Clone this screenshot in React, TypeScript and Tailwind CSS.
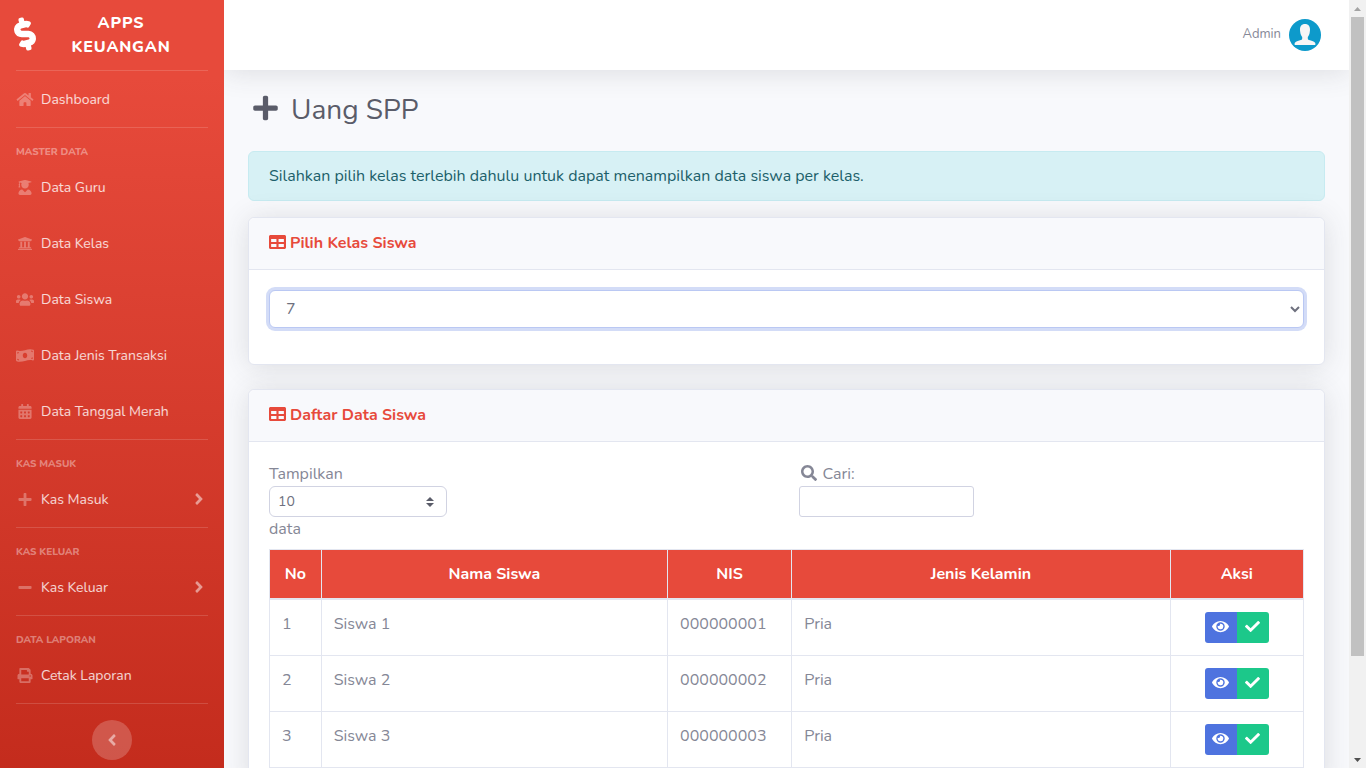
import React, { useState } from "react";
import type { IconType } from "react-icons";
import {
  FaAngleLeft,
  FaAngleRight,
  FaCalendarAlt,
  FaCheck,
  FaDollarSign,
  FaEye,
  FaHome,
  FaMinus,
  FaMoneyBillWave,
  FaPlus,
  FaPrint,
  FaSearch,
  FaTable,
  FaUniversity,
  FaUserGraduate,
  FaUsers,
} from "react-icons/fa";

type NavEntry = { label: string; icon: IconType; expandable?: boolean };
type NavSection = { title?: string; items: NavEntry[] };

const sections: NavSection[] = [
  { items: [{ label: "Dashboard", icon: FaHome }] },
  {
    title: "Master Data",
    items: [
      { label: "Data Guru", icon: FaUserGraduate },
      { label: "Data Kelas", icon: FaUniversity },
      { label: "Data Siswa", icon: FaUsers },
      { label: "Data Jenis Transaksi", icon: FaMoneyBillWave },
      { label: "Data Tanggal Merah", icon: FaCalendarAlt },
    ],
  },
  { title: "Kas Masuk", items: [{ label: "Kas Masuk", icon: FaPlus, expandable: true }] },
  { title: "Kas Keluar", items: [{ label: "Kas Keluar", icon: FaMinus, expandable: true }] },
  { title: "Data Laporan", items: [{ label: "Cetak Laporan", icon: FaPrint }] },
];

const students = [
  { no: 1, name: "Siswa 1", nis: "000000001", gender: "Pria" },
  { no: 2, name: "Siswa 2", nis: "000000002", gender: "Pria" },
  { no: 3, name: "Siswa 3", nis: "000000003", gender: "Pria" },
];

function Divider() {
  return <hr className="mx-4 h-px border-0 bg-white/15" />;
}

function Sidebar() {
  return (
    <nav className="flex w-56 shrink-0 flex-col bg-linear-to-b from-[#e74a3b] from-10% to-[#be2617] to-115%">
      <a href="#" className="flex h-[70px] shrink-0 items-center px-4 text-white">
        <FaDollarSign className="mb-0.5 h-8 w-[18px] shrink-0 -rotate-15 overflow-visible stroke-white stroke-[24]" />
        <span className="mx-4 flex-1 text-center text-base font-extrabold tracking-wider uppercase">
          Apps Keuangan
        </span>
      </a>
      {sections.map((section, index) => (
        <div key={index}>
          <Divider />
          {section.title && (
            <h2 className="mx-4 mt-[17px] text-[10px] leading-[14px] font-extrabold text-white/40 uppercase">
              {section.title}
            </h2>
          )}
          {section.items.map(({ label, icon: Icon, expandable }) => (
            <a key={label} href="#" className="flex h-14 items-center gap-[7px] px-4 text-sm text-white/80">
              <Icon className="h-[15px] w-[18px] shrink-0 text-white/30" />
              <span className="flex-1 pt-0.5">{label}</span>
              {expandable && <FaAngleRight className="h-[18px] w-[18px] text-white/50" />}
            </a>
          ))}
        </div>
      ))}
      <Divider />
      <button
        type="button"
        aria-label="Toggle sidebar"
        className="mx-auto mt-4 flex size-10 shrink-0 items-center justify-center rounded-full bg-white/20 text-white/50"
      >
        <FaAngleLeft className="size-[18px]" />
      </button>
    </nav>
  );
}

function Avatar() {
  return (
    <svg viewBox="0 0 32 32" className="size-8" aria-hidden="true">
      <circle cx="16" cy="16" r="16" fill="#0d9acb" />
      <path
        fill="#f8f6f6"
        d="M16 5c3.3 0 5 2.2 5 5.4 0 1.2-.1 1.7-.2 2.3-.2 2.3-1 4.200-2 5.200v1.500c0 1 .8 1.500 2.200 1.900 3.400.9 5.500 1.700 5.500 3.700 0 .7-.4 1-1 1h-19c-.6 0-1-.3-1-1 0-2 2.100-2.800 5.500-3.700 1.400-.4 2.200-.9 2.200-1.900v-1.500c-1-1-1.800-2.900-2-5.200-.1-.6-.2-1.100-.2-2.300C11 7.200 12.700 5 16 5z"
      />
    </svg>
  );
}

function Card({ title, children }: { title: string; children: React.ReactNode }) {
  return (
    <section className="mb-6 rounded-md border border-[#e3e6f0] bg-white shadow-[0_2px_28px_rgba(58,59,69,0.15)]">
      <h2 className="flex items-start gap-1 rounded-t-md border-b border-[#e3e6f0] bg-[#f8f9fc] px-5 py-4 text-base leading-[19px] font-bold text-[#e74a3b]">
        <FaTable className="h-4 w-[17px]" preserveAspectRatio="none" />
        {title}
      </h2>
      <div className="p-5">{children}</div>
    </section>
  );
}

function StudentTable() {
  const head = "border border-b-2 border-[#e3e6f0] p-3 text-center font-bold";
  const cell = "border border-[#e3e6f0] p-3 align-top";
  return (
    <table className="mt-2 w-full table-fixed border-collapse">
      <colgroup>
        <col className="w-[5%]" />
        <col />
        <col className="w-[12%]" />
        <col className="w-[36.6%]" />
        <col className="w-[12.9%]" />
      </colgroup>
      <thead className="bg-[#e74a3b] text-white">
        <tr>
          <th className={head}>No</th>
          <th className={head}>Nama Siswa</th>
          <th className={head}>NIS</th>
          <th className={head}>Jenis Kelamin</th>
          <th className={head}>Aksi</th>
        </tr>
      </thead>
      <tbody>
        {students.map((s) => (
          <tr key={s.no}>
            <td className={cell}>{s.no}</td>
            <td className={cell}>{s.name}</td>
            <td className={cell}>{s.nis}</td>
            <td className={cell}>{s.gender}</td>
            <td className={cell}>
              <div className="flex justify-center text-white">
                <button
                  type="button"
                  aria-label={`Lihat ${s.name}`}
                  className="flex h-[31px] w-8 items-center justify-center rounded-l-[3px] bg-[#4e73df] pb-0.5"
                >
                  <FaEye className="h-[15px] w-[17px]" />
                </button>
                <button
                  type="button"
                  aria-label={`Pilih ${s.name}`}
                  className="flex h-[31px] w-8 items-center justify-center rounded-r-[3px] bg-[#1cc88a] pb-0.5"
                >
                  <FaCheck className="size-[15px]" />
                </button>
              </div>
            </td>
          </tr>
        ))}
      </tbody>
    </table>
  );
}

function ScrollRail() {
  return (
    <div aria-hidden="true" className="flex w-[17px] shrink-0 flex-col bg-[#f1f1f1]">
      <div className="flex h-[17px] items-center justify-center">
        <svg viewBox="0 0 7 4" className="h-1 w-[7px]" fill="#a3a3a3">
          <path d="M3.500 0L7 4H0z" />
        </svg>
      </div>
      <div className="flex-1 px-[2px]">
        <div className="h-[87%] bg-[#c1c1c1]" />
      </div>
      <div className="flex h-[17px] items-center justify-center">
        <svg viewBox="0 0 7 4" className="h-1 w-[7px]" fill="#505050">
          <path d="M0 0h7L3.500 4z" />
        </svg>
      </div>
    </div>
  );
}

export default function App() {
  const [kelas, setKelas] = useState("7");
  const [size, setSize] = useState("10");
  const [query, setQuery] = useState("");

  return (
    <div className="flex h-screen overflow-hidden bg-[#f8f9fc] font-['Nunito','Noto_Sans',sans-serif] text-base text-[#858796]">
      <Sidebar />
      <div className="min-w-0 flex-1 overflow-hidden">
        <header className="mb-6 flex h-[70px] items-center justify-end bg-white px-7 shadow-[0_2px_28px_rgba(58,59,69,0.15)]">
          <a href="#" className="flex items-center gap-2 text-[13px]">
            Admin
            <Avatar />
          </a>
        </header>
        <main className="px-6">
          <h1 className="mb-6 flex items-start gap-2 text-[28px] leading-[33px] text-[#5a5c69]">
            <FaPlus className="h-7 w-[35px]" />
            Uang SPP
          </h1>
          <p className="mb-4 rounded-md border border-[#c7ebf1] bg-[#d7f1f5] px-5 py-3 text-[#1c606a]">
            Silahkan pilih kelas terlebih dahulu untuk dapat menampilkan data siswa per kelas.
          </p>
          <Card title="Pilih Kelas Siswa">
            <select
              aria-label="Pilih Kelas Siswa"
              value={kelas}
              onChange={(e) => setKelas(e.target.value)}
              className="mb-4 block h-[38px] w-full rounded-md border border-[#bac8f3] bg-white px-3 py-1.5 text-[#6e707e] ring-3 ring-[#4e73df]/25 outline-none"
            >
              <option>7</option>
              <option>8</option>
              <option>9</option>
            </select>
          </Card>
          <Card title="Daftar Data Siswa">
            <div className="grid grid-cols-2 gap-6">
              <div>
                <label htmlFor="page-size" className="block">
                  Tampilkan
                </label>
                <div className="relative w-[178px]">
                  <select
                    id="page-size"
                    value={size}
                    onChange={(e) => setSize(e.target.value)}
                    className="block h-[31px] w-full appearance-none rounded-md border border-[#d1d3e2] bg-white pr-7 pl-2 text-sm text-[#6e707e]"
                  >
                    <option>10</option>
                    <option>25</option>
                    <option>50</option>
                    <option>100</option>
                  </select>
                  <svg
                    viewBox="0 0 4 5"
                    className="pointer-events-none absolute top-1/2 right-[13px] h-[10px] w-2 -translate-y-1/2"
                    fill="#5a5c69"
                    aria-hidden="true"
                  >
                    <path d="M2 0L0 2h4zm0 5L0 3h4z" />
                  </svg>
                </div>
                <div>data</div>
              </div>
              <div>
                <label htmlFor="search" className="flex items-center gap-1">
                  <FaSearch className="mb-0.5 h-4 w-5" />
                  Cari:
                </label>
                <input
                  id="search"
                  type="search"
                  value={query}
                  onChange={(e) => setQuery(e.target.value)}
                  className="block h-[31px] w-[175px] rounded-[3px] border border-[#d1d3e2] bg-white px-2 text-sm text-[#6e707e]"
                />
              </div>
            </div>
            <StudentTable />
          </Card>
        </main>
      </div>
      <ScrollRail />
    </div>
  );
}
